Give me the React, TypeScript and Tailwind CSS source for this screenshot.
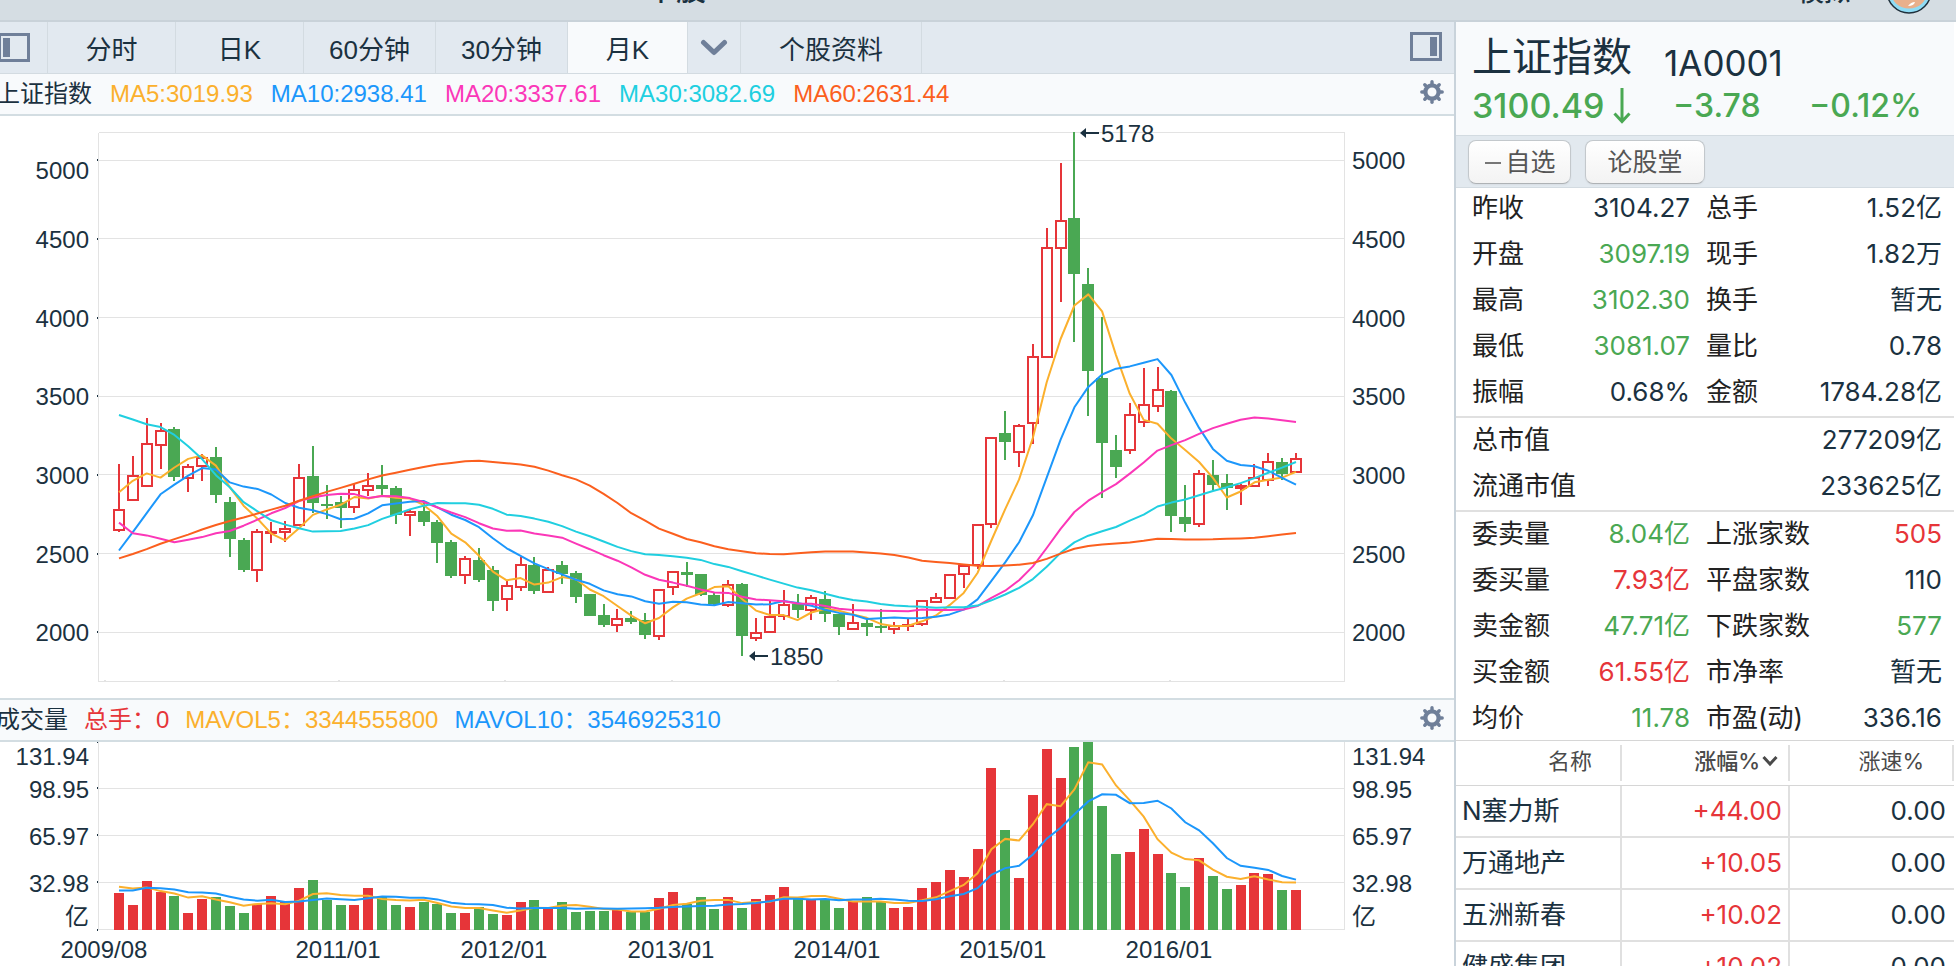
import type { ReactNode } from 'react';

const RED = '#e63539';
const GREEN = '#4aa853';
const INK = '#1b3140';
const GRID = '#e3e3e3';

const COLORS = {
  ma5: '#fbb02d',
  ma10: '#1c97fb',
  ma20: '#fb37b8',
  ma30: '#20cfe0',
  ma60: '#fb5f1e',
};

// monthly closes before the first candle, needed by the long averages
const HISTORY = [
  1320, 1340, 1266, 1191, 1306, 1181, 1159, 1060, 1080, 1083, 1162, 1155, 1092, 1099, 1161, 1258, 1299, 1298, 1440, 1641,
  1672, 1612, 1658, 1752, 1837, 2099, 2675, 2786, 2881, 3183, 3841, 4109, 3820, 4471, 5218, 5552, 5954, 4871, 5261, 4383,
  4348, 3472, 3693, 3433, 2736, 2775, 2397, 2293, 1728, 1871, 1820, 1990, 2082, 2373, 2477, 2632, 2959, 3412, 2667,
];

// open, high, low, close, volume
const CANDLES = [
  [2650, 3071, 2639, 2779, 25.5], [2842, 3122, 2842, 2995, 17], [2931, 3363, 2923, 3195, 33.9], [3190, 3332, 3039, 3277, 26.2],
  [3290, 3306, 2963, 2989, 23.4], [2982, 3071, 2893, 3051, 11.4], [3058, 3135, 2963, 3109, 21.3], [3115, 3179, 2823, 2870, 22.7],
  [2829, 2861, 2480, 2592, 16.4], [2588, 2600, 2384, 2398, 11.4], [2397, 2658, 2321, 2637, 17.8], [2636, 2702, 2569, 2638, 23.4],
  [2636, 2709, 2575, 2655, 19.4], [2682, 3071, 2677, 2978, 29], [2995, 3185, 2760, 2820, 34.6], [2815, 2937, 2721, 2808, 20.6],
  [2829, 2868, 2664, 2787, 17], [2797, 2944, 2760, 2905, 17], [2905, 3014, 2868, 2928, 29], [2937, 3065, 2874, 2911, 23.1],
  [2918, 2931, 2690, 2743, 17], [2742, 2775, 2613, 2762, 15.7], [2772, 2825, 2677, 2701, 19.2], [2702, 2715, 2442, 2567, 17.8],
  [2575, 2588, 2346, 2359, 11.4], [2363, 2486, 2308, 2468, 11.4], [2461, 2537, 2321, 2333, 15.5], [2397, 2423, 2137, 2199, 10.7],
  [2212, 2324, 2132, 2292, 10], [2290, 2480, 2264, 2428, 19.2], [2429, 2480, 2245, 2262, 20.6], [2258, 2417, 2255, 2396, 15],
  [2429, 2455, 2309, 2372, 19.2], [2378, 2391, 2188, 2225, 12.1], [2245, 2245, 2100, 2103, 12.8], [2111, 2181, 2032, 2047, 12.8],
  [2048, 2150, 2003, 2086, 13.5], [2088, 2137, 2054, 2068, 12.1], [2080, 2124, 1959, 1980, 12.1], [1978, 2270, 1949, 2269, 22],
  [2290, 2391, 2234, 2385, 26.2], [2385, 2444, 2289, 2365, 17.8], [2370, 2372, 2232, 2236, 22.7], [2237, 2253, 2165, 2177, 14.2],
  [2175, 2334, 2161, 2300, 22.7], [2306, 2315, 1850, 1979, 15], [1965, 2092, 1946, 1993, 21.3], [2003, 2198, 2001, 2098, 24],
  [2104, 2270, 2078, 2174, 29.7], [2181, 2242, 2093, 2141, 22], [2142, 2239, 2078, 2220, 20.6], [2213, 2260, 2068, 2115, 20.6],
  [2115, 2115, 1985, 2033, 15], [2023, 2178, 2018, 2056, 19.9], [2060, 2082, 1974, 2033, 22.7], [2042, 2148, 1998, 2026, 19.9],
  [2022, 2062, 1991, 2039, 15], [2040, 2087, 2010, 2048, 15.7], [2055, 2202, 2037, 2201, 29], [2194, 2252, 2184, 2217, 33.2],
  [2219, 2365, 2217, 2363, 41.6], [2371, 2423, 2284, 2420, 36.7], [2425, 2682, 2401, 2682, 56.3], [2691, 3239, 2665, 3234, 113.1],
  [3269, 3406, 3095, 3210, 69.6], [3147, 3324, 3049, 3310, 36], [3332, 3835, 3198, 3747, 94.1], [3748, 4572, 3742, 4441, 126.4],
  [4441, 4986, 4099, 4611, 106.1], [4633, 5178, 3847, 4277, 127.8], [4214, 4317, 3373, 3663, 131.5], [3614, 4006, 2850, 3205, 86.4],
  [3157, 3256, 2983, 3052, 52.8], [3156, 3459, 3133, 3382, 54.2], [3337, 3678, 3302, 3445, 70.3], [3440, 3684, 3400, 3539, 52.8],
  [3536, 3538, 2638, 2737, 39.5], [2731, 2933, 2638, 2687, 29.7], [2688, 3028, 2668, 3003, 50], [2997, 3097, 2905, 2938, 37.4],
  [2948, 3004, 2780, 2916, 28.3], [2917, 2945, 2807, 2929, 31.1], [2931, 3069, 2922, 2979, 39.5], [2970, 3140, 2931, 3085, 38.8],
  [3083, 3105, 2969, 3004, 27.6], [3018, 3137, 3014, 3100, 27.6],
];

const VOLUME_HISTORY = [17, 15, 29, 32, 31, 23, 30, 39, 32];

const YEARS = [
  { label: '2009/08', x: 104 },
  { label: '2011/01', x: 338 },
  { label: '2012/01', x: 504 },
  { label: '2013/01', x: 671 },
  { label: '2014/01', x: 837 },
  { label: '2015/01', x: 1003 },
  { label: '2016/01', x: 1169 },
];

const LEFT = 99;
const RIGHT = 1344;

const xAt = (i: number) => 119 + i * 13.847;
const priceY = (v: number) => 516.2 - (v - 2000) * 0.1573;
const volumeY = (v: number) => 187.5 - v * 1.427;

const average = (history: number[], values: number[], period: number, toY: (v: number) => number) => {
  const all = [...history, ...values];
  return values
    .map((_, i) => {
      const end = history.length + i + 1;
      const part = all.slice(end - period, end);
      const mean = part.reduce((a, b) => a + b, 0) / period;
      return `${xAt(i).toFixed(1)},${toY(mean).toFixed(1)}`;
    })
    .join(' ');
};

const closes = CANDLES.map((c) => c[3]);
const volumes = CANDLES.map((c) => c[4]);

const PRICE_LINES = [
  { period: 5, color: COLORS.ma5 },
  { period: 10, color: COLORS.ma10 },
  { period: 20, color: COLORS.ma20 },
  { period: 30, color: COLORS.ma30 },
  { period: 60, color: COLORS.ma60 },
];

const Gear = () => (
  <svg viewBox="0 0 24 24" className="w-6 h-6" fill="none" stroke="#6f7f99">
    <circle cx="12" cy="12" r="6.6" strokeWidth="4.2" />
    {[0, 45, 90, 135, 180, 225, 270, 315].map((a) => (
      <path key={a} d="M12 4.5V1.8" strokeWidth="3.4" strokeLinecap="round" transform={`rotate(${a} 12 12)`} />
    ))}
  </svg>
);

const PanelIcon = ({ side }: { side: 'left' | 'right' }) => (
  <svg viewBox="0 0 32 29" className="w-8 h-[29px]">
    <rect x="1.5" y="1.5" width="29" height="26" fill="none" stroke="#6f7f99" strokeWidth="3" />
    <rect x={side === 'left' ? 5 : 20} y="5" width="7" height="19" fill="#6f7f99" />
  </svg>
);

const Note = ({ x, y, text }: { x: number; y: number; text: string }) => (
  <g>
    <path d={`M${x} ${y}l6 -5v10z`} fill={INK} />
    <path d={`M${x + 4} ${y}h15`} stroke={INK} strokeWidth="2" />
    <text x={x + 21} y={y + 9} fontSize="24" fill={INK}>{text}</text>
  </g>
);

const PriceChart = () => (
  <svg viewBox="0 0 1454 582" className="block w-full h-auto" role="img" aria-label="月K">
    <g shapeRendering="crispEdges">
      <path d={`M${LEFT} 16.5H${RIGHT}V565.5H${LEFT - 0.5}V16.5`} fill="none" stroke={GRID} />
      {[2000, 2500, 3000, 3500, 4000, 4500, 5000].map((v) => (
        <g key={v}>
          <path d={`M${LEFT} ${priceY(v)}H${RIGHT}`} stroke={GRID} />
          <rect x={LEFT - 2} y={priceY(v) - 1} width="1" height="2" fill={INK} />
        </g>
      ))}
      {YEARS.map((y) => (
        <path key={y.label} d={`M${y.x + 1} 564v2`} stroke={GRID} strokeWidth="2" />
      ))}
    </g>
    <g fontSize="24" fill={INK}>
      {[2000, 2500, 3000, 3500, 4000, 4500, 5000].map((v) => (
        <g key={v}>
          <text x="89" y={priceY(v) + (v === 5000 ? 19 : 9)} textAnchor="end">{v}</text>
          <text x="1352" y={priceY(v) + 9}>{v}</text>
        </g>
      ))}
    </g>
    {CANDLES.map(([open, high, low, close], i) => {
      const up = close >= open;
      const color = up ? RED : GREEN;
      const x = Math.round(xAt(i));
      const top = Math.round(priceY(Math.max(open, close)));
      const bottom = Math.round(priceY(Math.min(open, close)));
      return (
        <g key={i} shapeRendering="crispEdges">
          <path
            d={`M${x} ${priceY(high)}V${top}M${x} ${bottom}V${priceY(low)}`}
            stroke={color}
            strokeWidth="2"
          />
          {up ? (
            <rect x={x - 5} y={top} width="10" height={Math.max(bottom - top, 1)} fill="none" stroke={color} strokeWidth="2" />
          ) : (
            <rect x={x - 6} y={top} width="12" height={Math.max(bottom - top, 2)} fill={color} />
          )}
        </g>
      );
    })}
    {PRICE_LINES.map((l) => (
      <polyline
        key={l.period}
        points={average(HISTORY, closes, l.period, priceY)}
        fill="none"
        stroke={l.color}
        strokeWidth="2"
        strokeLinejoin="round"
      />
    ))}
    <Note x={1080} y={17} text="5178" />
    <Note x={749} y={540} text="1850" />
  </svg>
);

const VOLUME_LABELS = [
  { text: '131.94', y: 23 },
  { text: '98.95', y: 56 },
  { text: '65.97', y: 103 },
  { text: '32.98', y: 150 },
  { text: '亿', y: 183 },
];

const VolumeChart = () => (
  <svg viewBox="0 0 1454 224" className="block w-full h-auto" role="img" aria-label="成交量">
    <g shapeRendering="crispEdges">
      <path d={`M${LEFT - 0.5} 0V187.5H${RIGHT}V0`} fill="none" stroke={GRID} />
      {[32.98, 65.97, 98.95].map((v) => (
        <path key={v} d={`M${LEFT} ${volumeY(v)}H${RIGHT}`} stroke={GRID} />
      ))}
      {[0, 32.98, 65.97, 98.95, 131.4].map((v) => (
        <rect key={v} x={LEFT - 2} y={volumeY(v) - 1} width="1" height="2" fill={INK} />
      ))}
      {CANDLES.map(([open, , , close, volume], i) => (
        <rect
          key={i}
          x={Math.round(xAt(i)) - 5}
          y={volumeY(volume)}
          width="10"
          height={188 - volumeY(volume)}
          fill={close >= open ? RED : GREEN}
        />
      ))}
    </g>
    <polyline points={average(VOLUME_HISTORY, volumes, 5, volumeY)} fill="none" stroke={COLORS.ma5} strokeWidth="2" />
    <polyline points={average(VOLUME_HISTORY, volumes, 10, volumeY)} fill="none" stroke={COLORS.ma10} strokeWidth="2" />
    <g fontSize="24" fill={INK}>
      {VOLUME_LABELS.map((l) => (
        <g key={l.text}>
          <text x="89" y={l.y} textAnchor="end">{l.text}</text>
          <text x="1352" y={l.y}>{l.text}</text>
        </g>
      ))}
      {YEARS.map((y) => (
        <text key={y.label} x={y.x} y="216" textAnchor="middle">{y.label}</text>
      ))}
    </g>
  </svg>
);

const TABS = [
  { label: '分时', width: 'w-32' },
  { label: '日K', width: 'w-32' },
  { label: '60分钟', width: 'w-[132px]' },
  { label: '30分钟', width: 'w-[132px]' },
  { label: '月K', width: 'w-[120px]', active: true },
];

const Tabs = () => (
  <nav className="flex h-13 border-b border-[#d3dbe1] bg-[#e2e9f0] text-[26px]">
    <button aria-label="左侧栏" className="flex w-12 items-center border-r border-[#d3dbe1]">
      <span className="-ml-0.5"><PanelIcon side="left" /></span>
    </button>
    {TABS.map((t) => (
      <button
        key={t.label}
        className={`${t.width} border-r border-[#d3dbe1] pt-1.5 ${t.active ? 'bg-[#f8fafc]' : ''}`}
      >
        {t.label}
      </button>
    ))}
    <button aria-label="更多周期" className="flex w-[53px] items-center justify-center border-r border-[#d3dbe1]">
      <svg viewBox="0 0 28 18" className="h-[18px] w-7" fill="none" stroke="#6f7f99" strokeWidth="5" strokeLinecap="round" strokeLinejoin="round">
        <path d="M3.500 3.500L14 13.500L24.500 3.500" />
      </svg>
    </button>
    <button className="w-[181px] border-r border-[#d3dbe1] pt-1.5">个股资料</button>
    <button aria-label="右侧栏" className="ml-auto flex items-center pr-3 pb-0.5"><PanelIcon side="right" /></button>
  </nav>
);

const Legend = ({ children, className, gap }: { children: ReactNode; className: string; gap: string }) => (
  <div className={`flex items-center justify-between overflow-hidden border-[#d3dde2] bg-[#f8fafc] pr-2.5 text-2xl/8 ${className}`}>
    <div className={`-ml-1 flex whitespace-nowrap ${gap}`}>{children}</div>
    <button aria-label="设置" className="pb-1"><Gear /></button>
  </div>
);

type Cell = { label: string; value: string; tone?: 'up' | 'down' };

const QUOTES: Cell[] = [
  { label: '昨收', value: '3104.27' }, { label: '总手', value: '1.52亿' },
  { label: '开盘', value: '3097.19', tone: 'down' }, { label: '现手', value: '1.82万' },
  { label: '最高', value: '3102.30', tone: 'down' }, { label: '换手', value: '暂无' },
  { label: '最低', value: '3081.07', tone: 'down' }, { label: '量比', value: '0.78' },
  { label: '振幅', value: '0.68%' }, { label: '金额', value: '1784.28亿' },
];

const CAPS: Cell[] = [
  { label: '总市值', value: '277209亿' },
  { label: '流通市值', value: '233625亿' },
];

const ORDERS: Cell[] = [
  { label: '委卖量', value: '8.04亿', tone: 'down' }, { label: '上涨家数', value: '505', tone: 'up' },
  { label: '委买量', value: '7.93亿', tone: 'up' }, { label: '平盘家数', value: '110' },
  { label: '卖金额', value: '47.71亿', tone: 'down' }, { label: '下跌家数', value: '577', tone: 'down' },
  { label: '买金额', value: '61.55亿', tone: 'up' }, { label: '市净率', value: '暂无' },
  { label: '均价', value: '11.78', tone: 'down' }, { label: '市盈(动)', value: '336.16' },
];

const toneClass = (tone?: 'up' | 'down') =>
  tone === 'up' ? 'text-[#e63539]' : tone === 'down' ? 'text-[#4aa853]' : 'text-[#1b3140]';

const CellGrid = ({ cells, className }: { cells: Cell[]; className: string }) => (
  <dl className={`grid gap-x-4 gap-y-1.5 border-[#e0e0e0] pr-3 pl-4 text-[26px]/10 ${className}`}>
    {cells.map((c) => (
      <div key={c.label} className="flex justify-between whitespace-nowrap">
        <dt className="text-[#222]">{c.label}</dt>
        <dd className={toneClass(c.tone)}>{c.value}</dd>
      </div>
    ))}
  </dl>
);

const STOCKS = [
  { name: 'N塞力斯', change: '+44.00', speed: '0.00' },
  { name: '万通地产', change: '+10.05', speed: '0.00' },
  { name: '五洲新春', change: '+10.02', speed: '0.00' },
  { name: '健盛集团', change: '+10.02', speed: '0.00' },
];

const StockTable = () => (
  <table className="w-full table-fixed border-separate border-spacing-0 border-t border-[#d6d6d6]">
    <thead className="text-[22px] text-[#4a4a4a]">
      <tr>
        <th className="h-[45px] w-[166px] border-b border-[#d6d6d6] p-0 font-normal">
          <div className="flex h-9 items-center justify-end border-r-2 border-[#e0e0e0] pr-7 pb-1">名称</div>
        </th>
        <th className="w-[168px] border-b border-[#d6d6d6] p-0 font-medium">
          <div className="flex h-9 items-center justify-end border-r-2 border-[#e0e0e0] pr-2.5 pb-1">
            <button className="flex items-center gap-0.5">
              涨幅%
              <svg viewBox="0 0 16 12" className="h-3 w-4" fill="none" stroke="currentColor" strokeWidth="3">
                <path d="M1.500 2l6.500 7l6.500 -7" />
              </svg>
            </button>
          </div>
        </th>
        <th className="border-b border-[#d6d6d6] p-0 font-normal">
          <div className="flex h-9 items-center justify-end border-r-2 border-[#e0e0e0] pr-7 pb-1">涨速%</div>
        </th>
      </tr>
    </thead>
    <tbody className="text-[26px]/8">
      {STOCKS.map((s) => (
        <tr key={s.name}>
          <td className="h-13 border-r-2 border-b-2 border-[#e0e0e0] p-0 pl-1.5 whitespace-nowrap">{s.name}</td>
          <td className="border-r-2 border-b-2 border-[#e0e0e0] p-0 pr-1.5 text-right text-[#e63539]">{s.change}</td>
          <td className="border-b-2 border-[#e0e0e0] p-0 pr-2 text-right">{s.speed}</td>
        </tr>
      ))}
    </tbody>
  </table>
);

const ACTION =
  'h-11 rounded-lg border border-[#c3c8cc] border-b-[#aeb2b5] bg-linear-to-b from-white to-[#f3f3f3] pt-0.5 shadow-xs';

const QuotePanel = () => (
  <aside className="w-[502px] shrink-0 border-r-2 border-l-2 border-r-white border-l-[#c9d3db] font-['Inter','Noto_Sans_CJK_SC',sans-serif]">
    <header className="h-[113px] bg-[#f8fafc] pt-2 pl-4">
      <h1 className="flex h-14 items-start gap-8 text-[40px]/[54px]">
        上证指数
        <span className="pt-1.5 text-[35px]">1A0001</span>
      </h1>
      <div className="flex items-center text-[32px]/10 font-medium text-[#4aa853]">
        <span className="w-[141px] text-[34px]">3100.49</span>
        <svg viewBox="0 0 18 36" className="h-9 w-[18px]" fill="none" stroke="currentColor" strokeWidth="3">
          <path d="M9 0V34M1.500 25.500L9 33.500L16.500 25.500" />
        </svg>
        <span className="ml-[42px] w-[136px]">−3.78</span>
        <span>−0.12%</span>
      </div>
    </header>
    <div className="flex h-[53px] gap-3.5 border-y border-[#d3dbe1] bg-[#e2e9ef] pt-1 pl-3 text-[25px] text-[#555]">
      <button className={`w-[103px] ${ACTION}`}>
        <span className="flex items-center justify-center gap-1 pl-0.5">
          <span className="h-0.5 w-4 bg-[#777]" />
          自选
        </span>
      </button>
      <button className={`w-30 ${ACTION}`}>论股堂</button>
    </div>
    <CellGrid cells={QUOTES} className="grid-cols-[218px_1fr] border-b-2 pb-1" />
    <CellGrid cells={CAPS} className="grid-cols-1 border-b-2 pt-0.5 pb-1" />
    <CellGrid cells={ORDERS} className="grid-cols-[218px_1fr] py-0.5" />
    <StockTable />
  </aside>
);

export default function App() {
  return (
    <div className="flex h-screen flex-col overflow-hidden bg-white font-['Liberation_Sans','Noto_Sans_CJK_SC',sans-serif] text-[#1b3140]">
      <div className="flex h-[22px] shrink-0 items-end overflow-hidden border-b-2 border-[#c9d2d9] bg-[#d5dde3] pr-6 pb-3.5 text-[26px]/7 font-medium">
        <a href="#stock" className="ml-[646px] text-[30px]/8">个股</a>
        <a href="#sim" className="mr-9 ml-auto">模拟</a>
        <svg viewBox="0 0 46 46" className="-mb-2 w-[46px] shrink-0">
          <circle cx="23" cy="23" r="22" fill="#8fdcf5" stroke="#20303c" strokeWidth="1.500" />
          <ellipse cx="23" cy="24" rx="18" ry="16.500" fill="#e9b08c" />
          <path d="M22 38q3 -4 7 -4q-1 4 -7 4z" fill="#fff" />
        </svg>
      </div>
      <div className="flex min-h-0 flex-1">
        <main className="min-w-0 flex-1">
          <Tabs />
          <Legend className="h-[42px] border-b-2" gap="gap-[18px]">
            <span>上证指数</span>
            <span className="text-[#fbb02d]">MA5:3019.93</span>
            <span className="text-[#1c97fb]">MA10:2938.41</span>
            <span className="text-[#fb37b8]">MA20:3337.61</span>
            <span className="text-[#20cfe0]">MA30:3082.69</span>
            <span className="text-[#fb5f1e]">MA60:2631.44</span>
          </Legend>
          <PriceChart />
          <Legend className="h-11 border-y-2" gap="gap-4">
            <span>成交量</span>
            <span className="text-[#e63539]">总手：0</span>
            <span className="text-[#fbb02d]">MAVOL5：3344555800</span>
            <span className="text-[#1c97fb]">MAVOL10：3546925310</span>
          </Legend>
          <VolumeChart />
        </main>
        <QuotePanel />
      </div>
    </div>
  );
}
